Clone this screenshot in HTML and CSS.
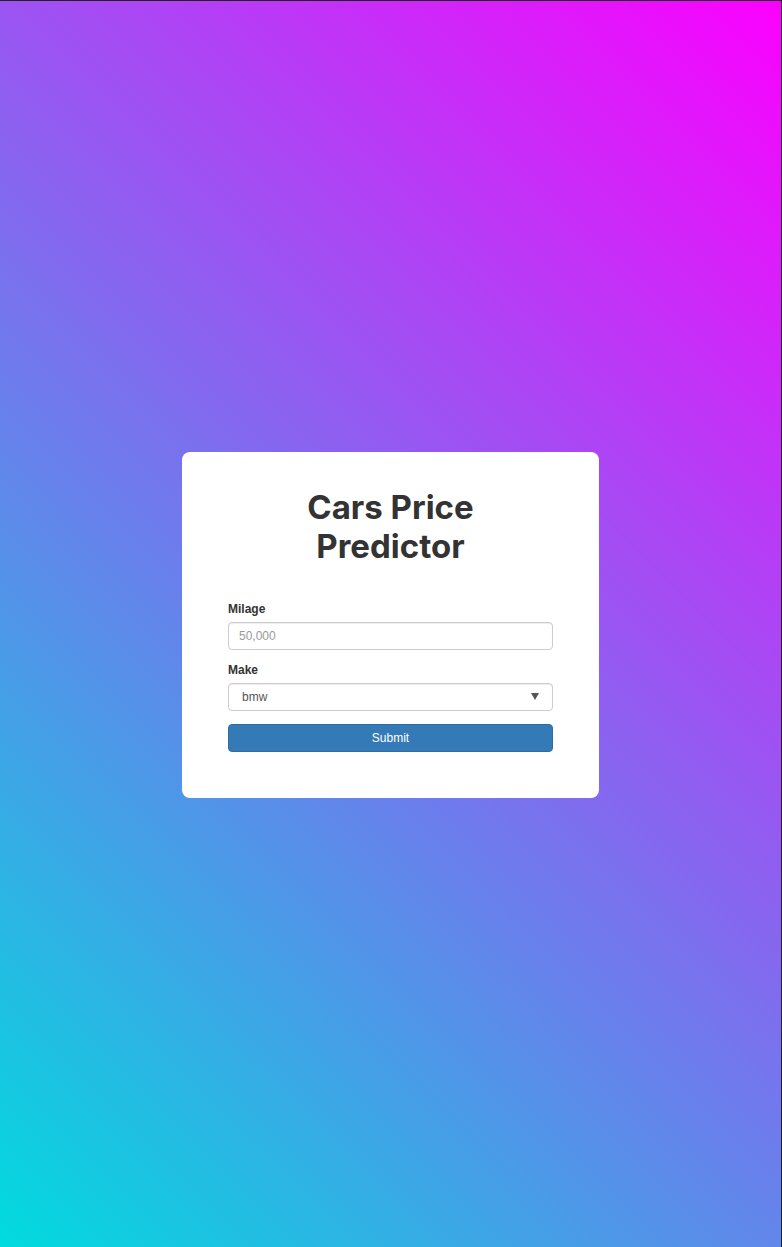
FILE: index.html
```html
<!DOCTYPE html>
<html lang="en">
<head>
<meta charset="utf-8">
<title>Cars Price Predictor</title>
<link rel="stylesheet" href="styles.css">
</head>
<body>
<main class="page">
  <section class="card">
    <h1 class="title">Cars Price Predictor</h1>
    <form class="form">
      <div class="group">
        <label class="label" for="milage">Milage</label>
        <input class="control" id="milage" type="text" placeholder="50,000">
      </div>
      <div class="group">
        <label class="label" for="make">Make</label>
        <select class="control select" id="make">
          <option>bmw</option>
        </select>
      </div>
      <button class="btn" type="button">Submit</button>
    </form>
  </section>
</main>
</body>
</html>
```
FILE: styles.css
```css
* { box-sizing: border-box; }
html, body { margin: 0; padding: 0; }
body {
  height: 1247px;
  background: linear-gradient(45deg, #00dbde 0%, #fc00ff 100%);
  font-family: "Liberation Sans", Arial, sans-serif;
  color: #333;
}
.page {
  height: 100%;
  border-top: 1px solid #222;
  border-right: 1px solid #222;
  padding-top: 1px;
  display: flex;
  align-items: center;
  justify-content: center;
}
.card {
  width: 417px;
  background: #fff;
  border-radius: 8px;
  padding: 36px 46px 46px;
}
.title {
  font-family: Inter, "Open Sans", sans-serif;
  font-weight: 700;
  font-size: 33px;
  line-height: 39px;
  color: #333;
  text-align: center;
  max-width: 240px;
  margin: 0 auto 35px;
  letter-spacing: 0;
}
.form { display: flex; flex-direction: column; }
.group { display: flex; flex-direction: column; margin-bottom: 12px; }
.label {
  font-size: 12px;
  font-weight: 700;
  line-height: 17px;
  margin-bottom: 4px;
  color: #333;
}
.control {
  height: 28px;
  width: 100%;
  border: 1px solid #ccc;
  border-radius: 4px;
  padding: 0 10px;
  font-family: "Liberation Sans", Arial, sans-serif;
  font-size: 12px;
  color: #555;
  background: #fff;
  box-shadow: inset 0 1px 1px rgba(0,0,0,.075);
  outline: none;
}
.control::placeholder { color: #999; }
.select {
  appearance: none;
  -webkit-appearance: none;
  padding-left: 13px;
  background-image: url("data:image/svg+xml,%3Csvg xmlns='http://www.w3.org/2000/svg' width='8' height='7'%3E%3Cpath d='M0 0h8L4 7z' fill='%23555'/%3E%3C/svg%3E");
  background-repeat: no-repeat;
  background-position: right 13px center;
}
.btn {
  margin-top: 1px;
  height: 28px;
  width: 100%;
  background: #337ab7;
  border: 1px solid #2e6da4;
  border-radius: 4px;
  color: #fff;
  font-family: "Liberation Sans", Arial, sans-serif;
  font-size: 12px;
  padding: 0;
}
```
